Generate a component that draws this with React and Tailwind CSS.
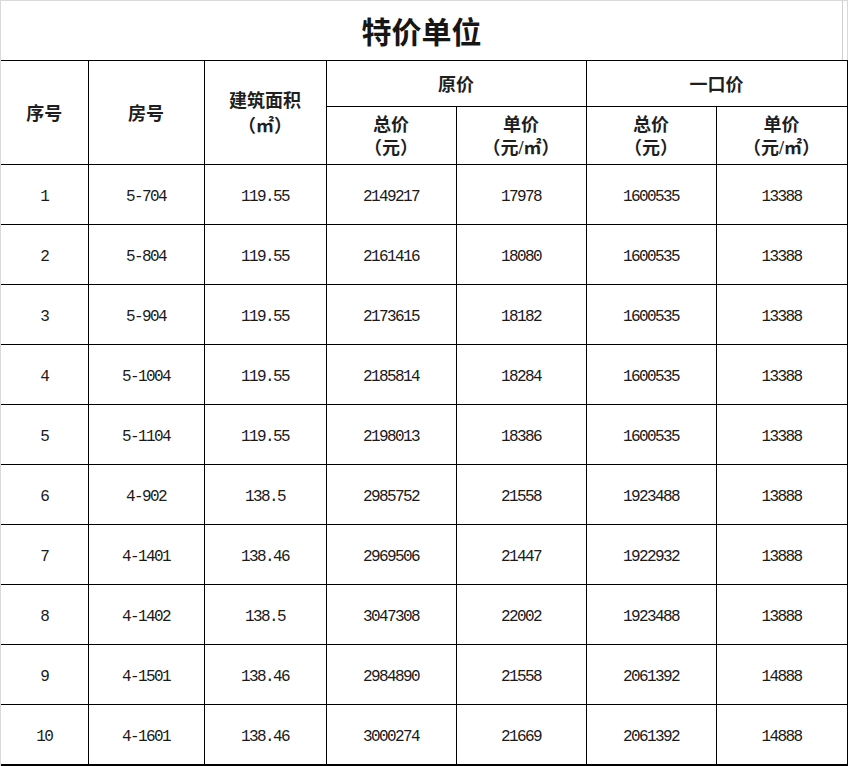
import React from 'react'

const rows = [
  ['1', '5-704', '119.55', '2149217', '17978', '1600535', '13388'],
  ['2', '5-804', '119.55', '2161416', '18080', '1600535', '13388'],
  ['3', '5-904', '119.55', '2173615', '18182', '1600535', '13388'],
  ['4', '5-1004', '119.55', '2185814', '18284', '1600535', '13388'],
  ['5', '5-1104', '119.55', '2198013', '18386', '1600535', '13388'],
  ['6', '4-902', '138.5', '2985752', '21558', '1923488', '13888'],
  ['7', '4-1401', '138.46', '2969506', '21447', '1922932', '13888'],
  ['8', '4-1402', '138.5', '3047308', '22002', '1923488', '13888'],
  ['9', '4-1501', '138.46', '2984890', '21558', '2061392', '14888'],
  ['10', '4-1601', '138.46', '3000274', '21669', '2061392', '14888'],
]

const cjk = { fontFamily: '"Liberation Serif", "Noto Sans CJK SC", serif' }
const mono = { fontFamily: '"Liberation Mono", "Noto Sans CJK SC", monospace' }

export default function App() {
  return (
    <div className="w-[848px] h-[766px] bg-[#d9d9d9] overflow-hidden">
      <div className="w-[846px] ml-[1px] mt-[1px] bg-white">
        <div className="h-[59px] flex items-center justify-center border-r border-[#cfcfcf] mr-[4px]">
          <span className="text-[30px] font-bold text-[#161616] pt-[3px]" style={cjk}>特价单位</span>
        </div>
        <table className="table-fixed border-collapse w-[846px] text-[#1a1a1a]">
          <colgroup>
            <col className="w-[87px]" />
            <col className="w-[116px]" />
            <col className="w-[122px]" />
            <col className="w-[130px]" />
            <col className="w-[130px]" />
            <col className="w-[130px]" />
            <col className="w-[131px]" />
          </colgroup>
          <thead style={cjk} className="font-bold text-[18px] leading-[23px] text-[#1f1f1f]">
            <tr className="h-[46px]">
              <th rowSpan={2} className="border-y border-r border-black font-bold pt-[3px]">序号</th>
              <th rowSpan={2} className="border border-black font-bold pt-[3px]">房号</th>
              <th rowSpan={2} className="border border-black font-bold pt-[3px]">
                <div className="pb-[2px]">建筑面积</div>
                <div>（㎡）</div>
              </th>
              <th colSpan={2} className="border border-black font-bold pt-[3px]">原价</th>
              <th colSpan={2} className="border border-black font-bold pt-[3px]">一口价</th>
            </tr>
            <tr className="h-[58px]">
              <th className="border border-black font-bold pt-[2px]">
                <div>总价</div>
                <div>（元）</div>
              </th>
              <th className="border border-black font-bold pt-[2px]">
                <div>单价</div>
                <div>（元/㎡）</div>
              </th>
              <th className="border border-black font-bold pt-[2px]">
                <div>总价</div>
                <div>（元）</div>
              </th>
              <th className="border border-black font-bold pt-[2px]">
                <div>单价</div>
                <div>（元/㎡）</div>
              </th>
            </tr>
          </thead>
          <tbody style={mono} className="text-[16px] tracking-[-1.6px]">
            {rows.map((r, i) => (
              <tr key={i} className="h-[60px]">
                {r.map((c, j) => (
                  <td
                    key={j}
                    className={`text-center pt-[5px] border border-black ${j === 0 ? 'border-l-0' : ''} ${i === rows.length - 1 ? 'border-b-2' : ''}`}
                  >
                    {c}
                  </td>
                ))}
              </tr>
            ))}
          </tbody>
        </table>
      </div>
    </div>
  )
}
